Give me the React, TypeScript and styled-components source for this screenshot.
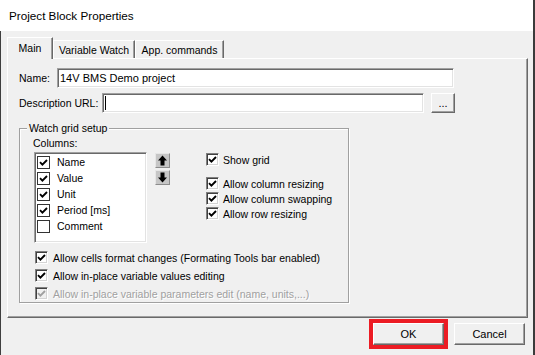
import styled, { createGlobalStyle } from 'styled-components'



const GlobalStyle = createGlobalStyle`
    html, body {
        margin: 0;
        padding: 0;
        background: #f0f0f0;
    }
    * {
        box-sizing: border-box;
    }
`


const Window = styled.div`
    width: 535px;
    height: 355px;
    display: flex;
    flex-direction: column;
    border-right: 2px solid #3b3b3b;
    font-family: "Liberation Sans", Arial, sans-serif;
    font-size: 10.5px;
    color: #000;
    overflow: hidden;
`

const TitleBar = styled.div`
    height: 31px;
    flex: none;
    display: flex;
    align-items: center;
    padding-left: 9px;
    background: #fff;
    font-size: 11.7px;
    color: #000;
`

const Body = styled.div`
    flex: 1;
    display: flex;
    flex-direction: column;
    background: #f0f0f0;
    border-left: 1px solid #3f3f3f;
    padding: 6px 5px 0 6px;
`

const TabStrip = styled.div`
    height: 21px;
    display: flex;
    align-items: flex-end;
    position: relative;
    z-index: 1;
`

const Tab = styled.div<{ $active?: boolean; $w: number }>`
    width: ${p => p.$w}px;
    height: ${p => (p.$active ? 22 : 18)}px;
    margin-bottom: ${p => (p.$active ? -1 : 0)}px;
    display: flex;
    align-items: center;
    justify-content: center;
    padding-bottom: ${p => (p.$active ? 2 : 0)}px;
    background: #f0f0f0;
    border-top: 1px solid #fff;
    border-left: 1px solid #fff;
    border-right: 1px solid #696969;
    box-shadow: inset -1px 0 0 #a0a0a0;
    white-space: nowrap;
`

const Panel = styled.div`
    height: 260px;
    flex: none;
    display: flex;
    flex-direction: column;
    align-items: flex-start;
    padding: 9px 0 0 11px;
    border-top: 1px solid #fff;
    border-left: 1px solid #fff;
    border-right: 1px solid #696969;
    border-bottom: 1px solid #696969;
    box-shadow: inset -1px -1px 0 #a0a0a0;
`

const FieldRow = styled.div<{ $top?: number }>`
    display: flex;
    align-items: center;
    height: 20px;
    margin-top: ${p => p.$top ?? 0}px;
`

const Label = styled.span<{ $w: number }>`
    width: ${p => p.$w}px;
    flex: none;
    white-space: nowrap;
`

const TextBox = styled.div<{ $w: number }>`
    width: ${p => p.$w}px;
    height: 20px;
    display: flex;
    align-items: center;
    padding-left: 2px;
    background: #fff;
    border: 1px solid;
    border-color: #a0a0a0 #fff #fff #a0a0a0;
    box-shadow: inset 1px 1px 0 #696969, inset -1px -1px 0 #e3e3e3;
    font-size: 11px;
    white-space: nowrap;
`

const Caret = styled.span`
    width: 1px;
    height: 14px;
    background: #000;
`

const Button3D = styled.button<{ $w: number; $h: number }>`
    width: ${p => p.$w}px;
    height: ${p => p.$h}px;
    padding: 0;
    margin: 0;
    display: flex;
    align-items: center;
    justify-content: center;
    background: #f0f0f0;
    border: 1px solid;
    border-color: #fff #696969 #696969 #fff;
    box-shadow: inset -1px -1px 0 #a0a0a0;
    font-family: inherit;
    font-size: 11px;
    color: #000;
`

const OkButton = styled(Button3D)`
    outline: 4px solid #ec1c24;
    outline-offset: 0;
`

const GroupBox = styled.div`
    position: relative;
    width: 330px;
    height: 175px;
    margin-top: 15px;
    padding: 8px 0 0 13px;
    border: 1px solid #a0a0a0;
    box-shadow: 1px 1px 0 #fff, inset 1px 1px 0 #fff;
`

const Legend = styled.span`
    position: absolute;
    top: -8px;
    left: 7px;
    padding: 0 2px;
    background: #f0f0f0;
    line-height: 14px;
`

const SmallLabel = styled.div`
    line-height: 13px;
`

const ColumnsRow = styled.div`
    display: flex;
    align-items: flex-start;
    margin-top: 2px;
`

const ListBox = styled.div`
    width: 113px;
    height: 91px;
    margin-left: 1px;
    padding: 1px 0 0 2px;
    background: #fff;
    border: 1px solid;
    border-color: #a0a0a0 #fff #fff #a0a0a0;
    box-shadow: inset 1px 1px 0 #696969, inset -1px -1px 0 #e3e3e3;
`

const ArrowColumn = styled.div`
    display: flex;
    flex-direction: column;
    gap: 2px;
    margin: 1px 0 0 8px;
`

const ArrowButton = styled.div`
    width: 15px;
    height: 15px;
    display: flex;
    align-items: center;
    justify-content: center;
    background: #c6c6c6;
    border: 1px solid;
    border-color: #e6e6e6 #8c8c8c #8c8c8c #e6e6e6;
`

const OptionColumn = styled.div`
    display: flex;
    flex-direction: column;
    margin-left: 36px;
`

const CheckRow = styled.div<{ $h: number; $gap: number; $top?: number; $disabled?: boolean }>`
    height: ${p => p.$h}px;
    margin-top: ${p => p.$top ?? 0}px;
    display: flex;
    align-items: center;
    gap: ${p => p.$gap}px;
    white-space: nowrap;
    color: ${p => (p.$disabled ? '#a0a0a0' : '#000')};
    text-shadow: ${p => (p.$disabled ? '1px 1px 0 #fff' : 'none')};
`

const Box = styled.span<{ $flat?: boolean; $disabled?: boolean }>`
    width: 13px;
    height: 13px;
    flex: none;
    display: flex;
    align-items: center;
    justify-content: center;
    background: ${p => (p.$disabled ? '#f0f0f0' : '#fff')};
    border: 1px solid;
    border-color: ${p => (p.$flat ? '#333' : '#808080 #fff #fff #808080')};
    box-shadow: ${p => (p.$flat ? 'none' : 'inset 1px 1px 0 #404040, inset -1px -1px 0 #d4d4d4')};
`

const BottomChecks = styled.div`
    display: flex;
    flex-direction: column;
    gap: 1px;
    margin: 6px 0 0 2px;
`

const ButtonRow = styled.div`
    display: flex;
    justify-content: flex-end;
    gap: 10px;
    margin-top: 5px;
    padding-right: 3px;
`


const CheckMark = ({ color = '#000' }: { color?: string }) => (
    <svg width="9" height="9" viewBox="0 0 9 9">
        <path d="M1 4.2 L3.4 6.6 L8 2" fill="none" stroke={color} strokeWidth="1.9" />
    </svg>
)

const Check: React.FC<{ checked?: boolean; flat?: boolean; disabled?: boolean }> = ({ checked, flat, disabled }) => (
    <Box $flat={flat} $disabled={disabled}>
        {checked && <CheckMark color={disabled ? '#a0a0a0' : '#000'} />}
    </Box>
)

const ArrowIcon = ({ down }: { down?: boolean }) => (
    <svg width="11" height="11" viewBox="0 0 11 11" style={down ? { transform: 'rotate(180deg)' } : undefined}>
        <path d="M5.5 0.5 L10 5.5 H7.5 V10.5 H3.5 V5.5 H1 Z" fill="#000" />
    </svg>
)


const columns = [
    { name: 'Name', on: true },
    { name: 'Value', on: true },
    { name: 'Unit', on: true },
    { name: 'Period [ms]', on: true },
    { name: 'Comment', on: false },
]

const gridOptions = ['Allow column resizing', 'Allow column swapping', 'Allow row resizing']



export default function App() {

    return (
        <>
            <GlobalStyle />
            <Window>
                <TitleBar>Project Block Properties</TitleBar>
                <Body>
                    <TabStrip>
                        <Tab $active $w={46}>Main</Tab>
                        <Tab $w={82}>Variable Watch</Tab>
                        <Tab $w={89}>App. commands</Tab>
                    </TabStrip>
                    <Panel>
                        <FieldRow>
                            <Label $w={38}>Name:</Label>
                            <TextBox $w={397}>14V BMS Demo project</TextBox>
                        </FieldRow>
                        <FieldRow $top={5}>
                            <Label $w={83}>Description URL:</Label>
                            <TextBox $w={322}><Caret /></TextBox>
                            <span style={{ width: 7 }} />
                            <Button3D $w={24} $h={20}>...</Button3D>
                        </FieldRow>

                        <GroupBox>
                            <Legend>Watch grid setup</Legend>
                            <SmallLabel>Columns:</SmallLabel>
                            <ColumnsRow>
                                <ListBox>
                                    {columns.map(c => (
                                        <CheckRow key={c.name} $h={16} $gap={7}>
                                            <Check flat checked={c.on} />
                                            {c.name}
                                        </CheckRow>
                                    ))}
                                </ListBox>
                                <ArrowColumn>
                                    <ArrowButton><ArrowIcon /></ArrowButton>
                                    <ArrowButton><ArrowIcon down /></ArrowButton>
                                </ArrowColumn>
                                <OptionColumn>
                                    <CheckRow $h={15} $gap={4}>
                                        <Check checked />
                                        Show grid
                                    </CheckRow>
                                    {gridOptions.map((o, i) => (
                                        <CheckRow key={o} $h={15} $gap={4} $top={i === 0 ? 9 : 0}>
                                            <Check checked />
                                            {o}
                                        </CheckRow>
                                    ))}
                                </OptionColumn>
                            </ColumnsRow>
                            <BottomChecks>
                                <CheckRow $h={17} $gap={5}>
                                    <Check checked />
                                    Allow cells format changes (Formating Tools bar enabled)
                                </CheckRow>
                                <CheckRow $h={17} $gap={5}>
                                    <Check checked />
                                    Allow in-place variable values editing
                                </CheckRow>
                                <CheckRow $h={17} $gap={5} $disabled>
                                    <Check checked disabled />
                                    Allow in-place variable parameters edit (name, units,...)
                                </CheckRow>
                            </BottomChecks>
                        </GroupBox>
                    </Panel>
                    <ButtonRow>
                        <OkButton $w={71} $h={22}>OK</OkButton>
                        <Button3D $w={71} $h={22}>Cancel</Button3D>
                    </ButtonRow>
                </Body>
            </Window>
        </>
    )
}
